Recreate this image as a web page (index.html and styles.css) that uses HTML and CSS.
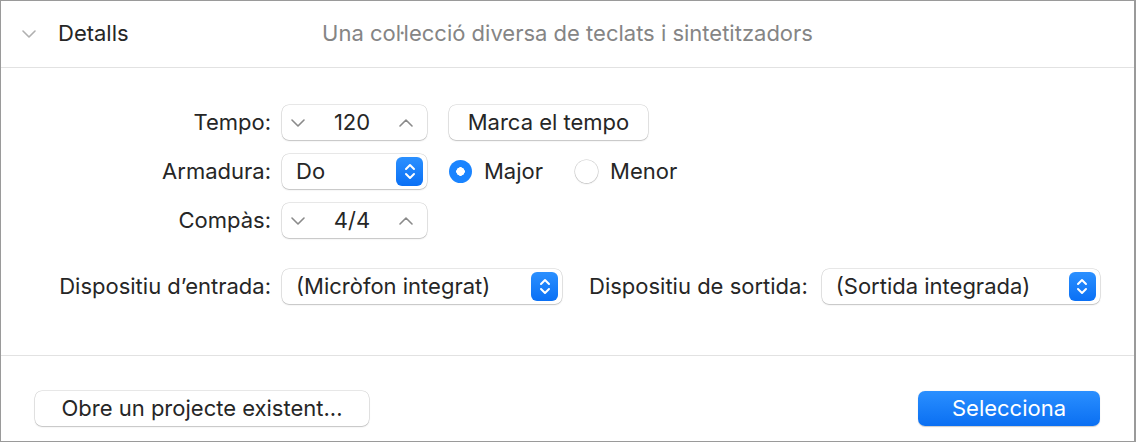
FILE: index.html
```html
<!DOCTYPE html>
<html lang="ca">
<head>
<meta charset="utf-8">
<title>Detalls</title>
<link rel="stylesheet" href="styles.css">
</head>
<body>
<div class="window">
  <header class="header">
    <div class="header-left">
      <svg class="disclosure" width="14" height="8" viewBox="0 0 14 8"><path d="M1 1 L7 7 L13 1" fill="none" stroke="#b0b0b0" stroke-width="1.6" stroke-linecap="round" stroke-linejoin="round"/></svg>
      <span class="title">Detalls</span>
    </div>
    <div class="subtitle">Una col·lecció diversa de teclats i sintetitzadors</div>
    <div></div>
  </header>

  <section class="settings">
    <div class="form">
      <div class="label">Tempo:</div>
      <div class="controls">
        <div class="stepper">
          <svg class="chev" width="14" height="8" viewBox="0 0 14 8"><path d="M1 1 L7 7 L13 1" fill="none" stroke="#8a8a8a" stroke-width="1.6" stroke-linecap="round" stroke-linejoin="round"/></svg>
          <span class="value">120</span>
          <svg class="chev" width="14" height="8" viewBox="0 0 14 8"><path d="M1 7 L7 1 L13 7" fill="none" stroke="#8a8a8a" stroke-width="1.6" stroke-linecap="round" stroke-linejoin="round"/></svg>
        </div>
        <button class="btn tap">Marca el tempo</button>
      </div>

      <div class="label">Armadura:</div>
      <div class="controls">
        <div class="popup small">
          <span class="popup-text">Do</span>
          <span class="popup-arrows"><svg width="12" height="19" viewBox="0 0 12 19"><path d="M2 7 L6 3 L10 7 M2 12 L6 16 L10 12" fill="none" stroke="#fff" stroke-width="2" stroke-linecap="round" stroke-linejoin="round"/></svg></span>
        </div>
        <label class="radio"><span class="dot on"></span><span class="txt">Major</span></label>
        <label class="radio menor"><span class="dot"></span><span class="txt">Menor</span></label>
      </div>

      <div class="label">Compàs:</div>
      <div class="controls">
        <div class="stepper">
          <svg class="chev" width="14" height="8" viewBox="0 0 14 8"><path d="M1 1 L7 7 L13 1" fill="none" stroke="#8a8a8a" stroke-width="1.6" stroke-linecap="round" stroke-linejoin="round"/></svg>
          <span class="value">4/4</span>
          <svg class="chev" width="14" height="8" viewBox="0 0 14 8"><path d="M1 7 L7 1 L13 7" fill="none" stroke="#8a8a8a" stroke-width="1.6" stroke-linecap="round" stroke-linejoin="round"/></svg>
        </div>
      </div>

      <div class="label device-label">Dispositiu d’entrada:</div>
      <div class="controls device-row">
        <div class="popup input">
          <span class="popup-text">(Micròfon integrat)</span>
          <span class="popup-arrows"><svg width="12" height="19" viewBox="0 0 12 19"><path d="M2 7 L6 3 L10 7 M2 12 L6 16 L10 12" fill="none" stroke="#fff" stroke-width="2" stroke-linecap="round" stroke-linejoin="round"/></svg></span>
        </div>
        <span class="out-label">Dispositiu de sortida:</span>
        <div class="popup output">
          <span class="popup-text">(Sortida integrada)</span>
          <span class="popup-arrows"><svg width="12" height="19" viewBox="0 0 12 19"><path d="M2 7 L6 3 L10 7 M2 12 L6 16 L10 12" fill="none" stroke="#fff" stroke-width="2" stroke-linecap="round" stroke-linejoin="round"/></svg></span>
        </div>
      </div>
    </div>
  </section>

  <footer class="footer">
    <button class="btn open">Obre un projecte existent...</button>
    <button class="btn primary">Selecciona</button>
  </footer>
</div>
</body>
</html>
```

FILE: styles.css
```css
* { box-sizing: border-box; }
html, body { margin: 0; padding: 0; background: #fff; }
body {
  font-family: Inter, "Liberation Sans", sans-serif;
  font-size: 22px;
  line-height: 26px;
  color: #262626;
}
.window {
  width: 1136px;
  height: 442px;
  border: 1px solid #9a9a9a;
  border-right-width: 2px;
  display: flex;
  flex-direction: column;
  background: #fff;
}
.header {
  height: 67px;
  flex: none;
  display: grid;
  grid-template-columns: 1fr auto 1fr;
  align-items: center;
  border-bottom: 1px solid #e2e2e2;
  padding-bottom: 2px;
}
.header-left {
  display: flex;
  align-items: center;
  padding-left: 21px;
}
.disclosure { margin-right: 22px; margin-top: 2px; }
.title { color: #262626; }
.subtitle { color: #858585; }

.settings {
  flex: none;
  height: 288px;
  border-bottom: 1px solid #e2e2e2;
  padding-top: 37px;
}
.form {
  display: grid;
  grid-template-columns: 270px 1fr;
  column-gap: 11px;
  row-gap: 14px;
  align-items: center;
}
.label { text-align: right; padding-bottom: 2px; }
.device-label { margin-top: 17px; }
.controls { display: flex; align-items: center; height: 35px; }
.device-row { margin-top: 17px; }

.stepper {
  width: 145px;
  height: 35px;
  border-radius: 7px;
  background: #fff;
  box-shadow: 0 0 0 0.5px rgba(0,0,0,0.18), 0 1px 1.5px rgba(0,0,0,0.16);
  display: flex;
  align-items: center;
  justify-content: space-between;
  padding: 0 14px 0 9px;
}
.value, .popup-text, .txt, .out-label { padding-bottom: 2px; }

.btn {
  font-family: inherit;
  font-size: 22px;
  line-height: 26px;
  color: #262626;
  height: 35px;
  border: none;
  border-radius: 7px;
  background: #fff;
  box-shadow: 0 0 0 0.5px rgba(0,0,0,0.18), 0 1px 1.5px rgba(0,0,0,0.16);
  padding: 0 0 2px 0;
}
.tap { width: 199px; margin-left: 22px; }

.popup {
  height: 35px;
  border-radius: 7px;
  background: #fff;
  box-shadow: 0 0 0 0.5px rgba(0,0,0,0.18), 0 1px 1.5px rgba(0,0,0,0.16);
  display: flex;
  align-items: center;
  justify-content: space-between;
  padding: 0 4px 0 14px;
}
.popup.small { width: 145px; }
.popup.input { width: 280px; }
.popup.output { width: 278px; }
.popup-arrows {
  width: 27px;
  height: 29px;
  border-radius: 6px;
  background: linear-gradient(#2b90ff, #0a70f5);
  display: flex;
  align-items: center;
  justify-content: center;
}
.popup-arrows svg { display: block; }

.radio { display: flex; align-items: center; margin-left: 22px; }
.radio.menor { margin-left: 32px; }
.dot {
  width: 23px;
  height: 23px;
  border-radius: 50%;
  margin-right: 12px;
  background: #fff;
  box-shadow: 0 0 0 0.5px rgba(0,0,0,0.22), 0 1px 1.5px rgba(0,0,0,0.12);
  display: inline-block;
}
.dot.on {
  background: radial-gradient(circle, #fff 0 4px, #1a84ff 4.5px);
  box-shadow: none;
}

.out-label { margin-left: 27px; margin-right: 14px; }

.footer {
  flex: 1;
  display: flex;
  align-items: flex-start;
  justify-content: space-between;
  padding: 35px 34px 0 34px;
}
.open { width: 334px; }
.primary {
  width: 182px;
  color: #fff;
  background: linear-gradient(#2a8fff, #0a6ff2);
  box-shadow: 0 0.5px 1px rgba(0,0,0,0.2);
}
```
